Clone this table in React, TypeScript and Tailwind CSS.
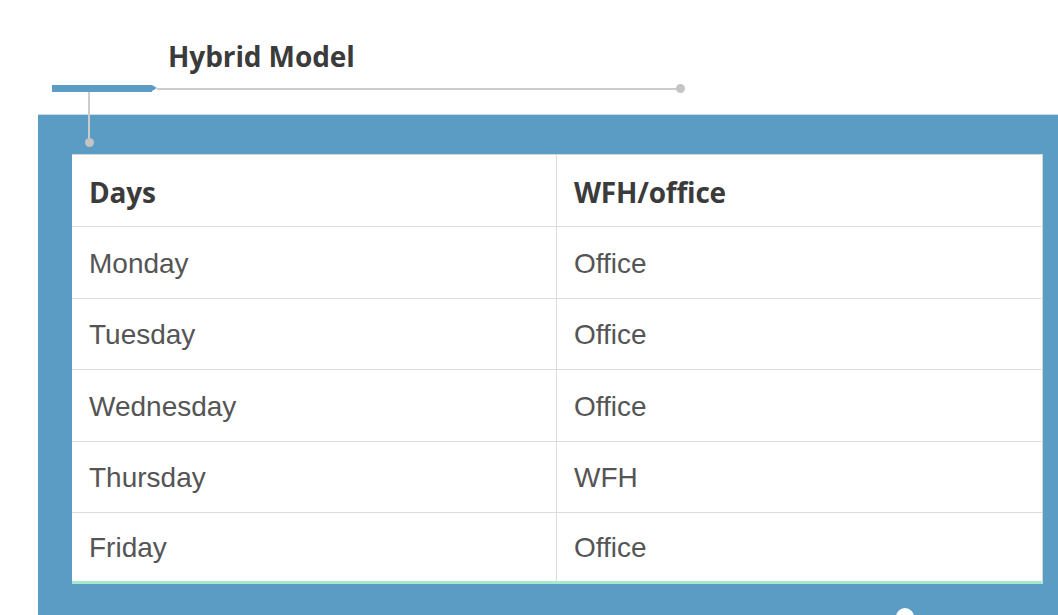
const ROWS = [
  { day: 'Monday', mode: 'Office' },
  { day: 'Tuesday', mode: 'Office' },
  { day: 'Wednesday', mode: 'Office' },
  { day: 'Thursday', mode: 'WFH' },
  { day: 'Friday', mode: 'Office' },
];

const HEAD = "font-['Open_Sans',sans-serif] font-bold text-[28px] text-[#3b3b3b] tracking-[-0.2px]";
const CELL = "font-['Liberation_Sans',Arial,sans-serif] text-[28px] text-[#555555]";

export default function App() {
  return (
    <div className="relative h-[615px] w-[1058px] overflow-hidden bg-white">
      {/* title */}
      <div className="h-[85px] pt-[34px]">
        <h1 className="ml-[168px] font-['Open_Sans',sans-serif] text-[28px] font-bold leading-[44px] tracking-[-0.1px] text-[#3b3b3b]">
          Hybrid Model
        </h1>
      </div>

      {/* timeline bar */}
      <div className="ml-[52px] flex h-[29px] items-start">
        <div className="h-[7px] w-[100px] bg-[#5b9cc4]" />
        <div className="h-0 w-0 border-y-[3.5px] border-l-[5px] border-y-transparent border-l-[#5b9cc4]" />
        <div className="mt-[2.5px] h-[2px] w-[520px] bg-[#cccccc]" />
        <div className="-ml-[1px] -mt-[1px] h-[9px] w-[9px] rounded-full bg-[#c4c4c4]" />
      </div>

      {/* blue panel */}
      <div className="ml-[38px] h-[501px] border-t border-[#c9dbe7] bg-[#5b9cc4] pl-[34px] pr-[15px] pt-[39px]">
        <div className="border-b-[3px] border-r border-t border-[#d6d6d6] border-b-[#a9e9d0] bg-white">
          <div className="flex h-[72px] border-b border-[#dddddd]">
            <div className={`flex w-[485px] items-center border-r border-[#dddddd] pl-[17px] pt-[2px] ${HEAD}`}>Days</div>
            <div className={`flex flex-1 items-center pl-[17px] pt-[2px] ${HEAD}`}>WFH/office</div>
          </div>
          {ROWS.map((r, i) => {
            const last = i === ROWS.length - 1;
            return (
              <div key={r.day} className={`flex ${last ? 'h-[68px]' : 'h-[71.5px] border-b border-[#dddddd]'}`}>
                <div className={`flex w-[485px] items-center border-r border-[#dddddd] pl-[17px] ${last ? 'pt-[1px]' : 'pt-[3px]'} ${CELL}`}>{r.day}</div>
                <div className={`flex flex-1 items-center pl-[17px] ${last ? 'pt-[1px]' : 'pt-[3px]'} ${CELL}`}>{r.mode}</div>
              </div>
            );
          })}
        </div>
      </div>

      {/* connector dropping into the panel */}
      <div className="absolute left-[88px] top-[92px] h-[50px] w-[2px] bg-[#cccccc]" />
      <div className="absolute left-[84.5px] top-[137.5px] h-[9px] w-[9px] rounded-full bg-[#c4c4c4]" />

      {/* white bump at bottom */}
      <div className="absolute left-[896px] top-[608px] h-[18px] w-[18px] rounded-full bg-white" />
    </div>
  );
}
